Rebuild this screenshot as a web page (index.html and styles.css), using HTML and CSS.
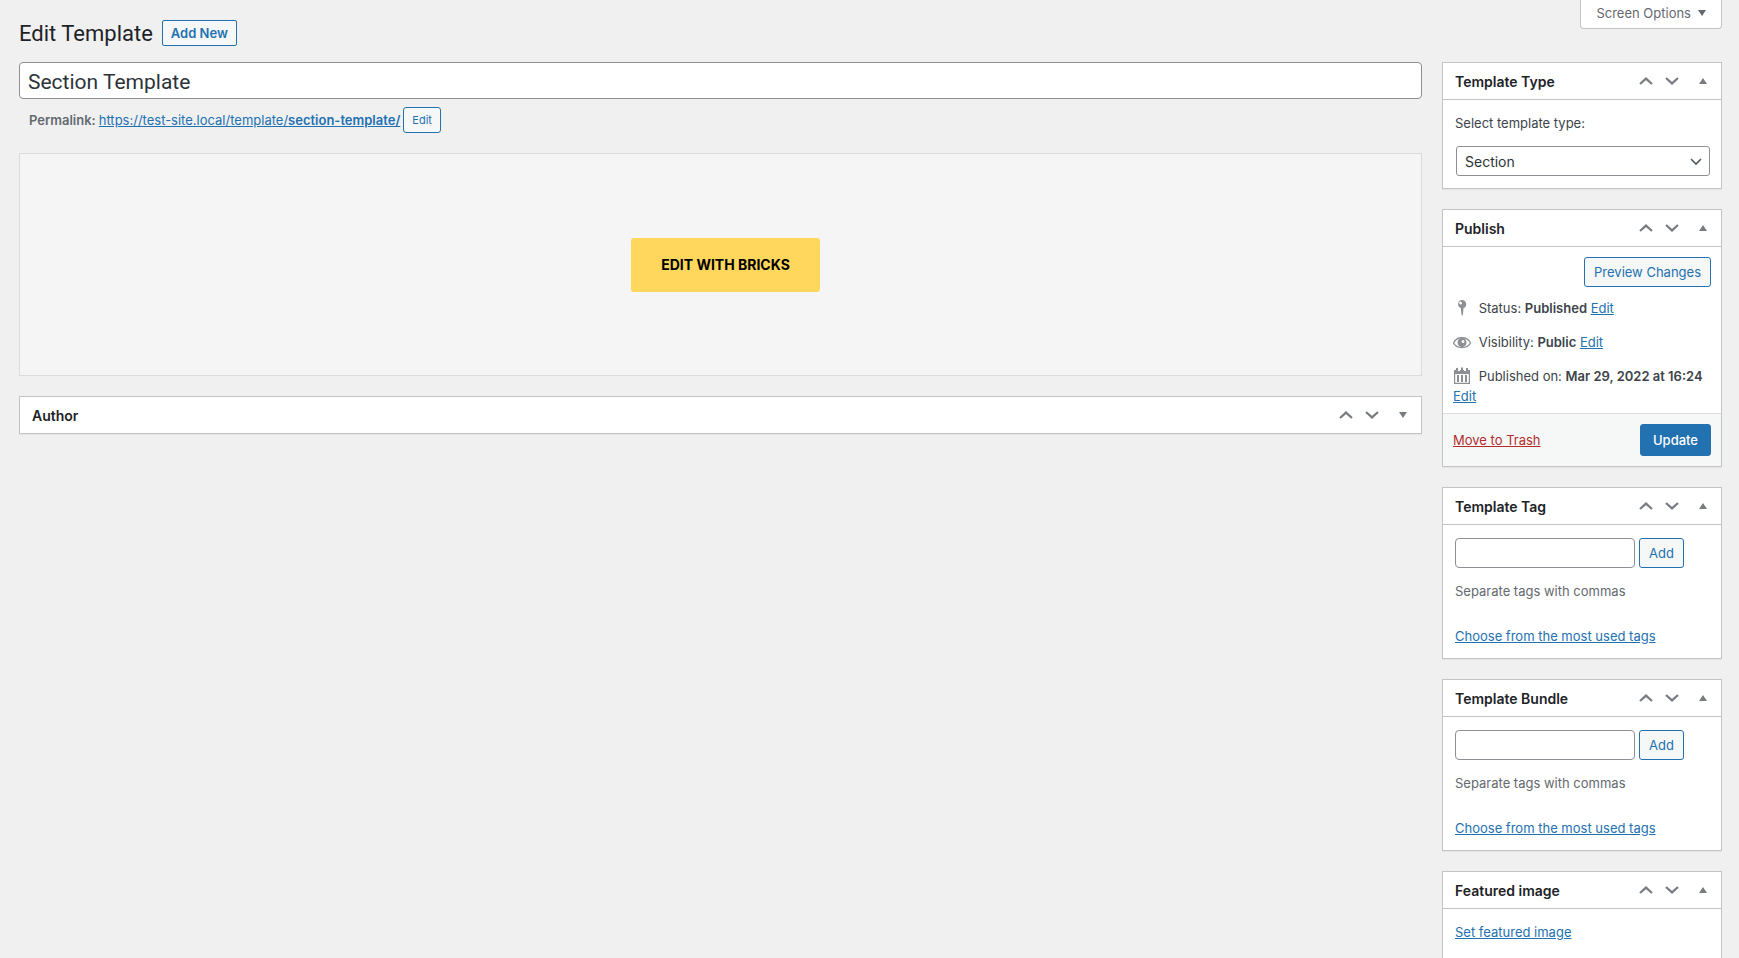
FILE: index.html
```
<!DOCTYPE html>
<html lang="en">
<head>
    <meta charset="UTF-8">
    <meta name="viewport" content="width=device-width, initial-scale=1.0">
    <title>Edit Template</title>
    <link rel="stylesheet" href="styles.css">
</head>
<body>
    <svg class="sprite" aria-hidden="true">
        <symbol id="icon-up" viewBox="0 0 14 8"><path d="M1 7l6-5.4L13 7" fill="none" stroke="currentColor" stroke-width="2.2"/></symbol>
        <symbol id="icon-down" viewBox="0 0 14 8"><path d="M1 1l6 5.4L13 1" fill="none" stroke="currentColor" stroke-width="2.2"/></symbol>
        <symbol id="icon-closed" viewBox="0 0 8 6"><path d="M0 0h8L4 6z" fill="currentColor"/></symbol>
        <symbol id="icon-open" viewBox="0 0 8 6"><path d="M0 6h8L4 0z" fill="currentColor"/></symbol>
    </svg>

    <div class="wrap">
        <header class="page-header">
            <h1>Edit Template</h1>
            <button type="button" class="add-new">Add New</button>
            <button type="button" class="screen-options">Screen Options <svg class="triangle" aria-hidden="true"><use href="#icon-closed"/></svg></button>
        </header>

        <div class="columns">
            <main>
                <input type="text" class="title-input" value="Section Template" aria-label="Title">
                <div class="permalink">
                    <strong>Permalink:</strong>
                    <a href="#">https://test-site.local/template/<b>section-template/</b></a>
                    <button type="button" class="button button-small">Edit</button>
                </div>

                <div class="editor">
                    <button type="button" class="bricks-button">EDIT WITH BRICKS</button>
                </div>

                <section class="postbox">
                    <div class="postbox-header closed">
                        <h2>Author</h2>
                        <button type="button" class="order" aria-label="Move up"><svg class="chevron"><use href="#icon-up"/></svg></button>
                        <button type="button" class="order" aria-label="Move down"><svg class="chevron"><use href="#icon-down"/></svg></button>
                        <button type="button" class="toggle" aria-label="Toggle panel"><svg class="triangle"><use href="#icon-closed"/></svg></button>
                    </div>
                </section>
            </main>

            <aside>
                <section class="postbox">
                    <div class="postbox-header">
                        <h2>Template Type</h2>
                        <button type="button" class="order" aria-label="Move up"><svg class="chevron"><use href="#icon-up"/></svg></button>
                        <button type="button" class="order" aria-label="Move down"><svg class="chevron"><use href="#icon-down"/></svg></button>
                        <button type="button" class="toggle" aria-label="Toggle panel"><svg class="triangle"><use href="#icon-open"/></svg></button>
                    </div>
                    <div class="inside type-inside">
                        <label for="template-type">Select template type:</label>
                        <div class="select-wrap">
                            <select id="template-type">
                                <option>Section</option>
                            </select>
                            <svg class="select-arrow" viewBox="0 0 12 8" aria-hidden="true"><path d="M1 1l5 5 5-5" fill="none" stroke="currentColor" stroke-width="1.6"/></svg>
                        </div>
                    </div>
                </section>

                <section class="postbox">
                    <div class="postbox-header">
                        <h2>Publish</h2>
                        <button type="button" class="order" aria-label="Move up"><svg class="chevron"><use href="#icon-up"/></svg></button>
                        <button type="button" class="order" aria-label="Move down"><svg class="chevron"><use href="#icon-down"/></svg></button>
                        <button type="button" class="toggle" aria-label="Toggle panel"><svg class="triangle"><use href="#icon-open"/></svg></button>
                    </div>
                    <div class="preview-action">
                        <button type="button" class="button">Preview Changes</button>
                    </div>
                    <div class="misc-pub">
                        <svg class="pub-icon" viewBox="0 0 20 20" aria-hidden="true"><path fill="currentColor" fill-rule="evenodd" d="M10 2a4.200 4.200 0 0 1 1.500 8.100L11 16l-.8 2-.8-2-.6-5.900A4.200 4.200 0 0 1 10 2zM8.900 3.700a1.400 1.400 0 1 0 .1 2.700 1.400 1.400 0 0 0-.1-2.700z"/></svg>
                        Status: <b>Published</b> <a href="#">Edit</a>
                    </div>
                    <div class="misc-pub">
                        <svg class="pub-icon" viewBox="0 0 20 20" aria-hidden="true"><path d="M1.500 11C4.500 4 15.500 4 18.500 11c-3 6-14 6-17 0z" fill="none" stroke="currentColor" stroke-width="1.300"/><path fill="currentColor" fill-rule="evenodd" d="M10 6a4.500 4.500 0 1 1 0 9 4.500 4.500 0 0 1 0-9zm1 2a1.500 1.500 0 1 0 0 3 1.500 1.500 0 0 0 0-3z"/></svg>
                        Visibility: <b>Public</b> <a href="#">Edit</a>
                    </div>
                    <div class="misc-pub curtime">
                        <svg class="pub-icon" viewBox="0 0 20 20" aria-hidden="true"><path fill="currentColor" fill-rule="evenodd" d="M2 4h2V2h2v3h2V4h4v1h2V2h2v2h2v14H2V4zm1.200 4v8.800h13.600V8H3.200z"/><path fill="currentColor" d="M5 2h1v3H5zM9 1.500h2V4H9zM5 9h2v7H5zM9 9h2v7H9zM13 9h2v7h-2z"/></svg>
                        Published on: <b>Mar 29, 2022 at 16:24</b> <a href="#">Edit</a>
                    </div>
                    <div class="publish-actions">
                        <a href="#" class="trash">Move to Trash</a>
                        <button type="button" class="button button-primary">Update</button>
                    </div>
                </section>

                <section class="postbox">
                    <div class="postbox-header">
                        <h2>Template Tag</h2>
                        <button type="button" class="order" aria-label="Move up"><svg class="chevron"><use href="#icon-up"/></svg></button>
                        <button type="button" class="order" aria-label="Move down"><svg class="chevron"><use href="#icon-down"/></svg></button>
                        <button type="button" class="toggle" aria-label="Toggle panel"><svg class="triangle"><use href="#icon-open"/></svg></button>
                    </div>
                    <div class="inside">
                        <div class="tag-form">
                            <input type="text" aria-label="Add template tag">
                            <button type="button" class="button">Add</button>
                        </div>
                        <p class="howto">Separate tags with commas</p>
                        <p class="tag-cloud"><a href="#">Choose from the most used tags</a></p>
                    </div>
                </section>

                <section class="postbox">
                    <div class="postbox-header">
                        <h2>Template Bundle</h2>
                        <button type="button" class="order" aria-label="Move up"><svg class="chevron"><use href="#icon-up"/></svg></button>
                        <button type="button" class="order" aria-label="Move down"><svg class="chevron"><use href="#icon-down"/></svg></button>
                        <button type="button" class="toggle" aria-label="Toggle panel"><svg class="triangle"><use href="#icon-open"/></svg></button>
                    </div>
                    <div class="inside">
                        <div class="tag-form">
                            <input type="text" aria-label="Add template bundle">
                            <button type="button" class="button">Add</button>
                        </div>
                        <p class="howto">Separate tags with commas</p>
                        <p class="tag-cloud"><a href="#">Choose from the most used tags</a></p>
                    </div>
                </section>

                <section class="postbox">
                    <div class="postbox-header">
                        <h2>Featured image</h2>
                        <button type="button" class="order" aria-label="Move up"><svg class="chevron"><use href="#icon-up"/></svg></button>
                        <button type="button" class="order" aria-label="Move down"><svg class="chevron"><use href="#icon-down"/></svg></button>
                        <button type="button" class="toggle" aria-label="Toggle panel"><svg class="triangle"><use href="#icon-open"/></svg></button>
                    </div>
                    <div class="inside">
                        <p class="featured"><a href="#">Set featured image</a></p>
                    </div>
                </section>
            </aside>
        </div>
    </div>
</body>
</html>
```
FILE: styles.css
```
* {
    box-sizing: border-box;
}
body {
    margin: 0;
    background: #f0f0f1;
    color: #3c434a;
    font-family: Inter, Roboto, sans-serif;
    font-size: 13px;
    line-height: 20px;
}
button, input, select {
    font-family: inherit;
    font-size: 13px;
    margin: 0;
}
button {
    cursor: pointer;
}
a {
    color: #2271b1;
}
b, strong {
    font-weight: 600;
}
p {
    margin: 0;
}
.sprite {
    display: none;
}
.wrap {
    padding: 0 17px 0 19px;
}

/* header */
.page-header {
    display: flex;
    align-items: flex-start;
    height: 62px;
}
h1 {
    margin: 0;
    padding-top: 19px;
    font-family: Roboto, sans-serif;
    font-size: 22px;
    font-weight: 400;
    line-height: 30px;
    color: #1d2327;
}
.add-new {
    height: 26px;
    margin: 20px 0 0 9px;
    padding: 0 8px;
    border: 1px solid #2271b1;
    border-radius: 2px;
    background: #f6f7f7;
    color: #2271b1;
    font-weight: 600;
}
.screen-options {
    display: flex;
    align-items: center;
    gap: 7px;
    height: 29px;
    margin-left: auto;
    padding: 0 15px 2px;
    border: 1px solid #c3c4c7;
    border-top: none;
    border-radius: 0 0 4px 4px;
    background: #fff;
    color: #646970;
}
.triangle {
    width: 8px;
    height: 6px;
}

.columns {
    display: grid;
    grid-template-columns: minmax(0, 1fr) 280px;
    gap: 20px;
}

/* main column */
.title-input {
    display: block;
    width: 100%;
    height: 37px;
    padding: 2px 8px 0;
    border: 1px solid #8c8f94;
    border-radius: 4px;
    background: #fff;
    color: #2c3338;
    font-family: Roboto, sans-serif;
    font-size: 21px;
}
.permalink {
    display: flex;
    align-items: center;
    gap: 3px;
    margin: 8px 0 20px;
    padding: 0 10px;
    color: #646970;
}
.editor {
    display: flex;
    align-items: center;
    justify-content: center;
    height: 223px;
    margin-bottom: 20px;
    padding-left: 10px;
    border: 1px solid #dcdcde;
    background: #f5f5f5;
}
.bricks-button {
    height: 54px;
    padding: 0 30px;
    border: none;
    border-radius: 3px;
    background: #ffd75c;
    color: #000;
    font-size: 14px;
    font-weight: 700;
}

/* buttons */
.button {
    height: 30px;
    padding: 0 9px;
    border: 1px solid #2271b1;
    border-radius: 3px;
    background: #f6f7f7;
    color: #2271b1;
}
.button-small {
    height: 26px;
    padding: 0 8px;
    font-size: 11px;
}
.button-primary {
    height: 32px;
    padding: 0 12px;
    background: #2271b1;
    color: #fff;
    font-weight: 500;
}

/* meta boxes */
.postbox {
    margin-bottom: 20px;
    border: 1px solid #c3c4c7;
    background: #fff;
    box-shadow: 0 1px 1px rgba(0, 0, 0, 0.04);
}
.postbox-header {
    display: flex;
    align-items: center;
    height: 37px;
    border-bottom: 1px solid #c3c4c7;
}
.postbox-header.closed {
    height: 36px;
    border-bottom: none;
}
h2 {
    flex: 1;
    margin: 0;
    padding: 1px 0 0 12px;
    font-size: 14px;
    font-weight: 600;
    color: #1d2327;
}
.order, .toggle {
    display: flex;
    align-items: center;
    justify-content: center;
    width: 26px;
    height: 36px;
    padding: 0;
    border: none;
    background: none;
    color: #787c82;
}
.toggle {
    width: 36px;
}
.chevron {
    width: 14px;
    height: 8px;
}
.inside {
    padding: 13px 12px 12px;
}
.type-inside {
    padding-right: 11px;
}
.type-inside label {
    display: block;
    margin-bottom: 13px;
}
.select-wrap {
    position: relative;
    padding-left: 1px;
}
select {
    display: block;
    appearance: none;
    width: 100%;
    height: 30px;
    padding: 0 24px 0 8px;
    border: 1px solid #8c8f94;
    border-radius: 3px;
    background: #fff;
    color: #2c3338;
    font-size: 14px;
}
.select-arrow {
    position: absolute;
    top: 12px;
    right: 8px;
    width: 12px;
    height: 8px;
    color: #50575e;
    pointer-events: none;
}

/* publish box */
.preview-action {
    padding: 10px 10px 5px;
}
.preview-action .button {
    display: block;
    margin-left: auto;
}
.misc-pub {
    padding: 6px 10px 8px;
}
.misc-pub.curtime {
    padding-bottom: 7px;
}
.pub-icon {
    width: 20px;
    height: 20px;
    margin: 0 3px 0 -1px;
    vertical-align: top;
    color: #8c8f94;
}
.publish-actions {
    display: flex;
    align-items: center;
    justify-content: space-between;
    padding: 10px;
    border-top: 1px solid #dcdcde;
    background: #f6f7f7;
}
.trash {
    color: #b32d2e;
}

/* tag boxes */
.tag-form {
    display: flex;
    gap: 4px;
}
.tag-form input {
    width: 180px;
    height: 30px;
    padding: 0 8px;
    border: 1px solid #8c8f94;
    border-radius: 4px;
    background: #fff;
}
.howto {
    margin: 13px 0 25px;
    color: #646970;
}
.featured {
    padding-bottom: 13px;
}
```
